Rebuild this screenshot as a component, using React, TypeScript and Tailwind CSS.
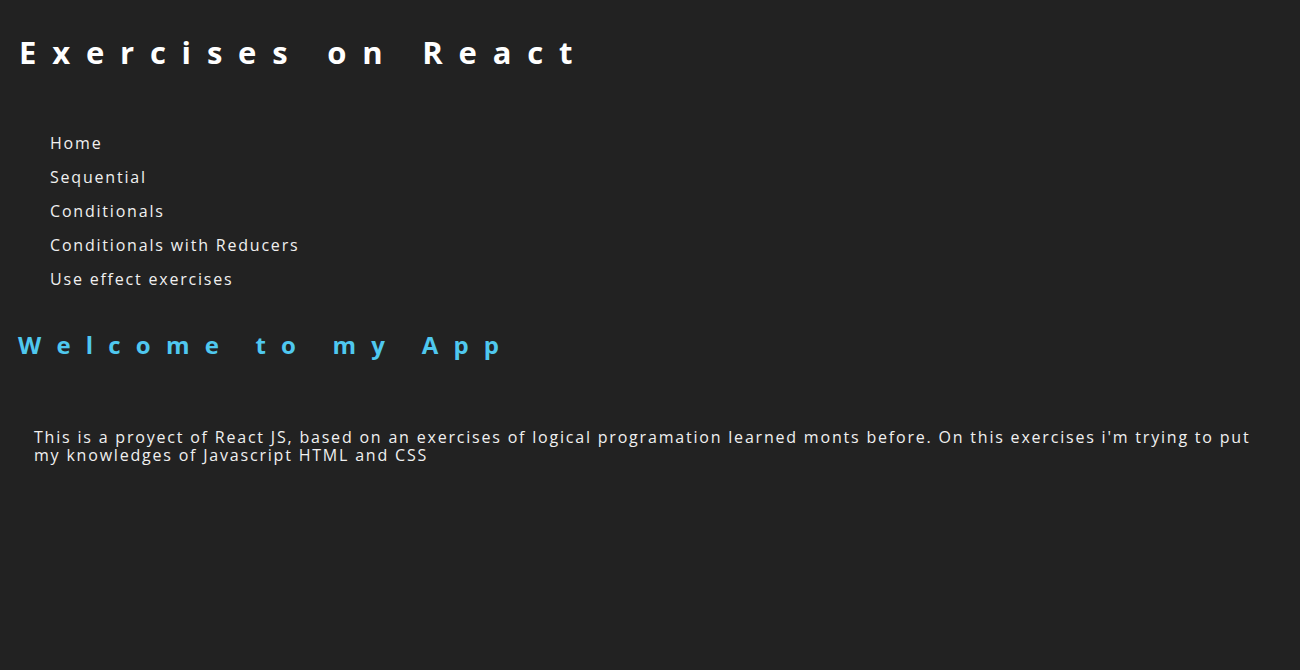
import React from "react";

const links = [
  "Home",
  "Sequential",
  "Conditionals",
  "Conditionals with Reducers",
  "Use effect exercises",
];

export default function App() {
  return (
    <div className="min-h-screen w-full bg-[#222222] font-['Open_Sans',sans-serif] text-[#f0f0f0]">
      <header className="px-[19px] pt-[32px]">
        <h1 className="text-[31px] font-bold leading-[40px] tracking-[15.8px] text-white">
          Exercises on React
        </h1>
      </header>

      <nav className="pl-[50px] pt-[54px]">
        <ul className="flex flex-col">
          {links.map((link) => (
            <li
              key={link}
              className="h-[34px] text-[16px] leading-[34px] tracking-[1.8px]"
            >
              {link}
            </li>
          ))}
        </ul>
      </nav>

      <h2 className="px-[18px] pt-[33px] text-[24px] font-bold leading-[32px] tracking-[15.2px] text-[#4fc8ef]">
        Welcome to my App
      </h2>

      <p className="px-[34px] pt-[67px] text-[16px] leading-[18px] tracking-[1.8px]">
        This is a proyect of React JS, based on an exercises of logical
        programation learned monts before. On this exercises i'm trying to put
        my knowledges of Javascript HTML and CSS
      </p>
    </div>
  );
}
